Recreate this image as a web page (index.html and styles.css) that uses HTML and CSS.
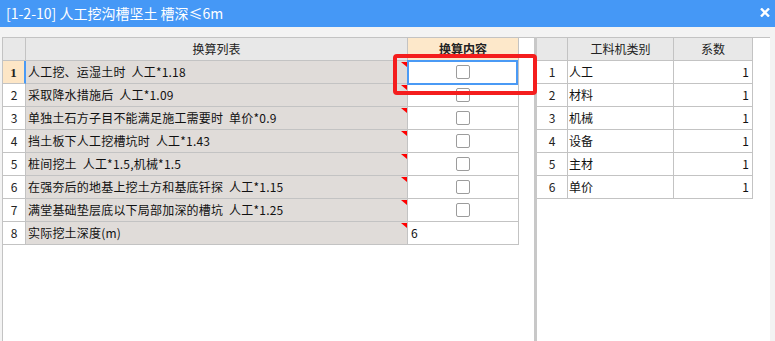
FILE: index.html
```html
<!DOCTYPE html>
<html lang="zh-CN">
<head>
    <meta charset="UTF-8">
    <title>换算</title>
    <link rel="stylesheet" href="styles.css">
</head>
<body>
    <div class="titlebar">
        <span class="title">[1-2-10] 人工挖沟槽坚土 槽深≤6m</span>
        <span class="close">
            <svg width="10" height="9" viewBox="0 0 10 9">
                <path d="M1 0.5 L9 8.5 M9 0.5 L1 8.5" stroke="#fff" stroke-width="2.4" fill="none"/>
            </svg>
        </span>
    </div>

    <div class="content">
        <div class="pane pane-left">
            <div class="grid grid-left">
                <div class="cell head"></div>
                <div class="cell head">换算列表</div>
                <div class="cell head head-active">换算内容</div>

                <div class="cell num num-current">1</div>
                <div class="cell txt">人工挖、运湿土时 人工*1.18</div>
                <div class="cell chk selected"><span class="box"></span></div>

                <div class="cell num">2</div>
                <div class="cell txt">采取降水措施后 人工*1.09</div>
                <div class="cell chk"><span class="box"></span></div>

                <div class="cell num">3</div>
                <div class="cell txt">单独土石方子目不能满足施工需要时 单价*0.9</div>
                <div class="cell chk"><span class="box"></span></div>

                <div class="cell num">4</div>
                <div class="cell txt">挡土板下人工挖槽坑时 人工*1.43</div>
                <div class="cell chk"><span class="box"></span></div>

                <div class="cell num">5</div>
                <div class="cell txt">桩间挖土 人工*1.5,机械*1.5</div>
                <div class="cell chk"><span class="box"></span></div>

                <div class="cell num">6</div>
                <div class="cell txt">在强夯后的地基上挖土方和基底钎探 人工*1.15</div>
                <div class="cell chk"><span class="box"></span></div>

                <div class="cell num">7</div>
                <div class="cell txt">满堂基础垫层底以下局部加深的槽坑 人工*1.25</div>
                <div class="cell chk"><span class="box"></span></div>

                <div class="cell num">8</div>
                <div class="cell txt">实际挖土深度(m)</div>
                <div class="cell val">6</div>
            </div>
        </div>

        <div class="pane pane-right">
            <div class="grid grid-right">
                <div class="cell head"></div>
                <div class="cell head">工料机类别</div>
                <div class="cell head">系数</div>

                <div class="cell num">1</div>
                <div class="cell name">人工</div>
                <div class="cell coef">1</div>

                <div class="cell num">2</div>
                <div class="cell name">材料</div>
                <div class="cell coef">1</div>

                <div class="cell num">3</div>
                <div class="cell name">机械</div>
                <div class="cell coef">1</div>

                <div class="cell num">4</div>
                <div class="cell name">设备</div>
                <div class="cell coef">1</div>

                <div class="cell num">5</div>
                <div class="cell name">主材</div>
                <div class="cell coef">1</div>

                <div class="cell num">6</div>
                <div class="cell name">单价</div>
                <div class="cell coef">1</div>
            </div>
        </div>
    </div>

    <!-- 标注框 -->
    <div class="mark"></div>
</body>
</html>
```

FILE: styles.css
```css
* {
    margin: 0;
    padding: 0;
    box-sizing: border-box;
}
body {
    font-family: "Noto Sans CJK SC", "Liberation Sans", sans-serif;
    font-size: 12px;
    color: #111;
    background: #f3f3f3;
    width: 775px;
    height: 341px;
    overflow: hidden;
    position: relative;
}
.titlebar {
    height: 27px;
    background: #4598f6;
    color: #fff;
    display: flex;
    align-items: center;
    justify-content: space-between;
    padding: 0 5px 0 6px;
}
.title {
    font-size: 14px;
    line-height: 1;
    padding-bottom: 1px;
}
.close {
    display: flex;
    margin-top: -3px;
}
.content {
    display: flex;
    height: 314px;
    padding: 10px 5px 0 2px;
}
.pane {
    background: #fff;
    height: 100%;
}
.pane-left {
    width: 532px;
    border-left: 1px solid #c3c3c3;
}
.pane-right {
    width: 236px;
    border-left: 3px solid #c8c8c8;
}
.grid {
    display: grid;
    grid-auto-rows: 23px;
    border-top: 1px solid #c3c3c3;
}
.grid-left {
    grid-template-columns: 23px 382px 111px;
}
.grid-right {
    grid-template-columns: 31px 106px 79px;
}
.cell {
    border-right: 1px solid #c3c3c3;
    border-bottom: 1px solid #c3c3c3;
    display: flex;
    align-items: center;
    padding: 0 2px;
    white-space: nowrap;
    overflow: hidden;
    line-height: 1;
}
.head {
    background: #e8e8e8;
    justify-content: center;
    color: #222;
}
.head-active {
    background: #fde8ca;
    font-weight: 700;
}
.num {
    justify-content: center;
    color: #222;
}
.num-current {
    background: #fde6c6;
    border-right: 2px solid #4a9af5;
    font-family: "Liberation Serif", serif;
    font-weight: 700;
    font-size: 13px;
}
.txt {
    background: #e0dcd9;
    position: relative;
    word-spacing: 3px;
    letter-spacing: 0.2px;
}
.txt::after {
    content: "";
    position: absolute;
    top: 1px;
    right: 0;
    border-top: 5px solid #f00;
    border-left: 6px solid transparent;
}
.chk {
    justify-content: center;
    overflow: visible;
}
.box {
    width: 14px;
    height: 14px;
    border: 1px solid #9c9c9c;
    border-radius: 2px;
    background: #fff;
}
.selected {
    position: relative;
    z-index: 2;
}
.selected::after {
    content: "";
    position: absolute;
    top: -1px;
    right: 0;
    bottom: -2px;
    left: -1px;
    border: 2px solid #4a9af5;
}
.val {
    padding-left: 3px;
}
.name {
    padding-left: 1px;
}
.coef {
    justify-content: flex-end;
    padding-right: 3px;
}
.mark {
    position: absolute;
    left: 393px;
    top: 54px;
    width: 144px;
    height: 41px;
    border: 4px solid #f41d1d;
    border-radius: 4px;
    z-index: 5;
}
```
